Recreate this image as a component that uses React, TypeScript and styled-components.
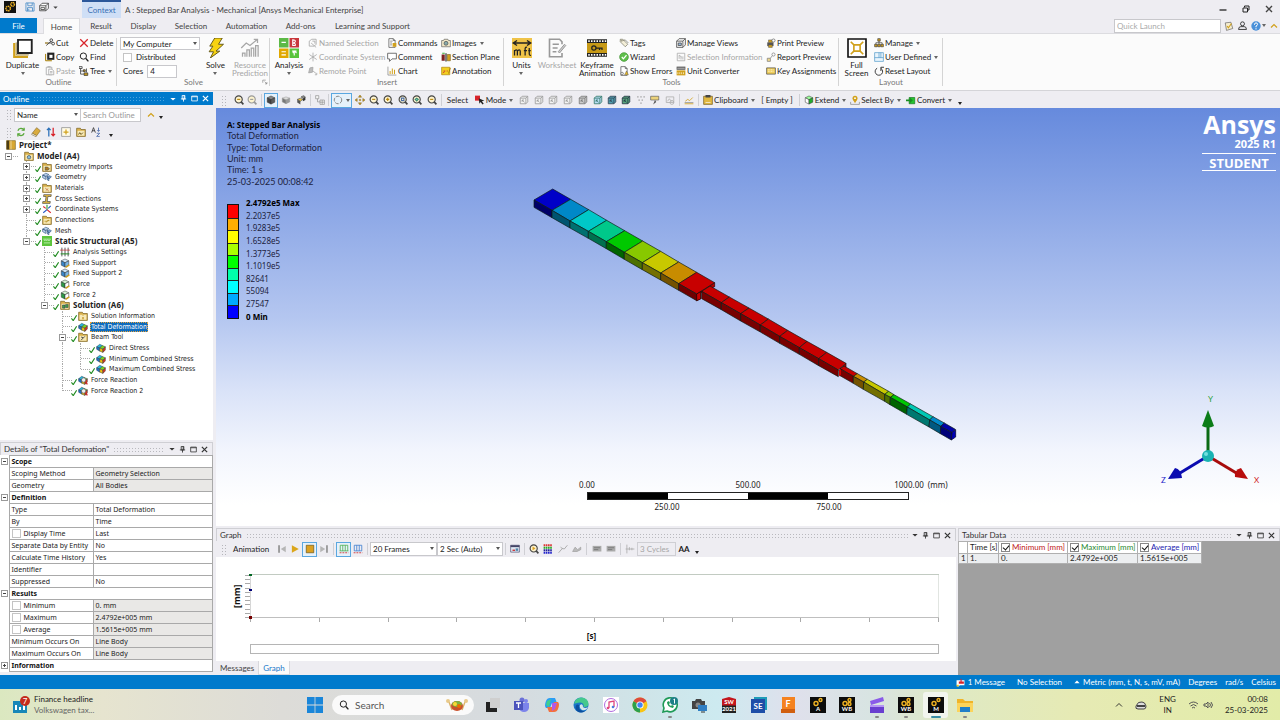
import React from "react";
import styled, { createGlobalStyle, css } from "styled-components";

const font = {
  ui: '"Lato", "Open Sans", sans-serif',
  dense: '"Noto Sans", "Open Sans", sans-serif',
  tree: '"DejaVu Sans Condensed", "DejaVu Sans", sans-serif',
};

const Global = createGlobalStyle`
  * { box-sizing: border-box; }
  body { margin: 0; background: #eeedf2; }
  body, button, input, select, table {
    font-family: ${font.ui};
    font-size: 8px;
    line-height: 12px;
    color: #222;
  }
`;

const c = {
  chrome: "#eeedf2",
  blue: "#007acc",
  gold: "#d1a11c",
  line: "#a9a9a9",
  off: "#a6a6a6",
  ink: "#333",
};

/* ---------- icons ---------- */

const cube = (top: string, left: string, right: string) => (
  <g stroke="#333" strokeWidth="0.8">
    <path d="M8 1.500 14 4.500 8 7.500 2 4.500Z" fill={top} />
    <path d="M2 4.500 8 7.500V14.500L2 11.500Z" fill={left} />
    <path d="M14 4.500 8 7.500V14.500L14 11.500Z" fill={right} />
  </g>
);
const folder = (inner: React.ReactNode) => (
  <g>
    <path d="M1 2h6l1 2h7v11H1z" fill="#d9b04a" stroke="#6b5313" />
    <path d="M2.500 6h11v8h-11z" fill="#f6e9b8" />
    {inner}
  </g>
);
const lens = (inner: React.ReactNode, col = "#444") => (
  <g fill="none" stroke={col} strokeWidth="1.800">
    <circle cx="7.500" cy="7" r="5.700" fill="#fdf3d0" />
    <path d="M11.500 11 15 15" strokeWidth="2.600" />
    {inner}
  </g>
);
const wireCube = (fill: string, col: string) => (
  <g stroke={col} strokeWidth="1.300" fill={fill}>
    <path d="M2 5 5 2h9v9l-3 3H2z" />
    <path d="M2 5h9v9M11 5l3-3" fill="none" />
    <path d="M5 8l4 4M5 8v3M5 8h3" fill="none" />
  </g>
);
const result = (
  <g stroke="#234" strokeWidth="0.7">
    <path d="M1 6 6 2 10 4 6 8Z" fill="#29b6d8" />
    <path d="M1 6 6 8V13L1 10Z" fill="#1f6fc4" />
    <path d="M6 8 10 4 15 6 11 10Z" fill="#7bd321" />
    <path d="M6 8 11 10V15L6 13Z" fill="#f1c40f" />
    <path d="M11 10 15 6V11L11 15Z" fill="#d9381e" />
  </g>
);
const gears = (s: string) => (
  <g fill="none" stroke={s} strokeWidth="2">
    <circle cx="5.500" cy="10" r="3" strokeDasharray="1.800 0.700" />
    <circle cx="11.500" cy="4.500" r="2.400" strokeDasharray="1.500 0.600" />
  </g>
);
const page = (col: string) => (
  <path d="M3 1h7l3 3v11H3zM10 1v3h3" fill="#fff" stroke={col} strokeWidth="1.200" />
);

const glyphs: Record<string, React.ReactNode> = {
  app: (<g><path d="M0 0h16v16H0z" fill="#111" />{gears("#f0b323")}</g>),
  save: (<g fill="none" stroke="#4f8fc8" strokeWidth="1.400"><path d="M1.500 1.500h13v13h-13z" /><path d="M4.500 1.500v4.500h7V1.500M4 14.500V9h8v5.500M6 14v-3" /></g>),
  openBox: (<g fill="#fff" stroke="#333" strokeWidth="1.200"><path d="M1 6h10v8H1zM1 6l4-4h10l-4 4M11 14l4-4V2" /><path d="M3 9h6v3H3z" /></g>),
  duplicate: (<g fill="none"><path d="M1 4v11h11" stroke={c.gold} strokeWidth="1.800" /><path d="M4 1.500h11v10.500H4z" fill="#fff" stroke="#222" strokeWidth="1.500" /><path d="M2.600 3.500v10h10" stroke="#8a6d1a" strokeWidth="0.6" /></g>),
  cut: (<g fill="none" stroke="#333" strokeWidth="1.300"><circle cx="10" cy="3.500" r="2.200" /><circle cx="13" cy="9" r="2.200" /><path d="M0 8h11M2 12l8-7" /><path d="M0 8h5" stroke={c.gold} /></g>),
  copy: (<g><path d="M1 3v11h10" fill="none" stroke="#a67c00" strokeWidth="1.600" /><path d="M3.500 1H15v11.500H3.500z" fill="#222" /><path d="M7 4.500h5v5H7z" fill="#fff" /></g>),
  paste: (<g fill="none" stroke={c.off} strokeWidth="1.300"><path d="M2 2h9v12H2z" /><path d="M6 5h5l3 3v6H6z" fill="#fff" /><path d="M4 1h5M8 9h4M8 11h4" /></g>),
  del: <path d="M2 2 14 14M14 2 2 14" stroke="#d8232a" strokeWidth="2" />,
  find: (<g fill="none" stroke="#222" strokeWidth="1.600"><circle cx="7" cy="6.500" r="5" /><path d="m11 10.500 4 4.500" strokeWidth="2.200" /></g>),
  tree: (<g fill="none" stroke="#333" strokeWidth="1.200"><path d="M0 1h5v3H0zM2.500 4v9h5M2.500 8h5" /><path d="M7 6h3v3H7zM8 11h6v4H8z" fill={c.gold} /><path d="M12 4v6" /></g>),
  bolt: <path d="M7 0h6l-3 5h4L8 10.500h3L3.500 16 6 11H2.500l3-4.500H3z" fill="#f7d312" stroke="#554a10" strokeWidth="0.7" />,
  resource: (<g fill="none" stroke={c.off} strokeWidth="1"><path d="M1 8 5 4l3 2 6-5M11 1h3v3" /><path d="M2 15v-3h2v3M5.500 15V9.500h2V15M9 15V8h2v7M12.500 15V6h2v9" /></g>),
  analysis: (<g><path d="M0 0h7.600v7.600H0z" fill="#5cb947" /><path d="M8.400 0H16v7.600H8.400z" fill="#c8373c" /><path d="M0 8.400h7.600V16H0z" fill="#e0a800" /><path d="M8.400 8.400H16V16H8.400z" fill="#58c43c" /><g stroke="#fff" fill="none" strokeWidth="0.9"><path d="M2 3.500h3.500M11 1.500q2.500 0 2 1.500-.5 1-2 1 2.500 0 2 2h-2zM2 11h3.500M2 13.500h3.500M10.500 10.500h3.500M11 12l1.500-1.500L14 12M12.200 11v3" /></g></g>),
  named: (<g fill="none" stroke={c.off} strokeWidth="1.300"><path d="M2 5l4-3h7v8l-3 3H2z" /><path d="M5 8l8 7M7 5h4v4" /></g>),
  coord: (<g stroke={c.off} strokeWidth="1.300"><path d="M8 1v14M2 4l12 8M14 4 2 12" /></g>),
  remote: (<g stroke={c.off} strokeWidth="1.300" fill="#bbb"><path d="M1 11 3 3l5-1-1 8z" /><path d="M8 8l5 4M11 14h3v-3" fill="none" /></g>),
  commands: (<g>{page("#555")}<path d="M5 5h4M5 8h3M5 11h3" stroke="#555" /><path d="M9 8h6v6H9z" fill={c.gold} /></g>),
  comment: <path d="M1 2h14v9H8l-4 4v-4H1z" fill="#fff" stroke="#555" strokeWidth="1.300" />,
  chart: (<g stroke={c.gold} strokeWidth="1.600"><path d="M1.500 1v13.500H15" stroke="#777" strokeWidth="1" fill="none" /><path d="M5 13V8M8.500 13V4M12 13V6" /></g>),
  images: (<g><path d="M1 4h3l1-2h6l1 2h3v10H1z" fill="#f2e9c8" stroke="#555" /><circle cx="8" cy="8.500" r="3.200" fill="#8aa" stroke="#444" /></g>),
  section: (<g><path d="M1 4h5v10H1z" fill="#7d2020" /><path d="M7 2h2v13H7z" fill="#333" /><path d="M10 4h5v10h-5z" fill={c.gold} stroke="#7d6420" /><path d="M2 2h4" stroke="#2a2" strokeWidth="1.500" /></g>),
  annotation: (<g><path d="M1 2h13v12H1z" fill="#f2cf1f" stroke="#a67c00" /><path d="M4 8h3M9 8h2M3 11l3-2" stroke="#c33" strokeWidth="1.300" /><path d="m12 12 3-9" stroke="#a67c00" strokeWidth="1.400" /></g>),
  units: (<g><path d="M0 0h16v16H0z" fill="#efc348" /><path d="M1 4h14M4 2 1 4l3 2M12 2l3 2-3 2" stroke="#222" fill="none" strokeWidth="1.100" /><path d="M2 14V9.500M2 10.500q2-2 2.300 0V14M4.300 10.500q2-2 2.300 0V14M10.500 14V8.500q.2-1.500 1.500-1M9.500 10h2.500M13.800 8v5q.2 1 1.400.8M13 10h2" stroke="#222" fill="none" strokeWidth="1" /></g>),
  worksheet: (<g fill="none" stroke="#999" strokeWidth="1.300"><path d="M12 5V3L10 1H2v14h10v-3" /><path d="M4.500 5h5M4.500 8h4M4.500 11h3" /><path d="m9 11 5-6 1 1-5 6z" fill="#ccc" strokeWidth="0.8" /></g>),
  keyframe: (<g><path d="M0 1h16v14H0z" fill="#222" /><path d="M0 4h16v8H0z" fill="#c79a17" /><path d="M1 2.500h15M1 13.500h15" stroke="#fff" strokeWidth="1.400" strokeDasharray="1.200 1" /><circle cx="5.500" cy="8" r="1.700" fill="none" stroke="#222" /><path d="M7 8h5v1.500M10 8v1.500" stroke="#222" fill="none" /></g>),
  tags: (<g fill="#f4efd8" stroke="#665" strokeWidth="1"><path d="M2 2h4l8 8-4 4-8-8z" /><circle cx="4.500" cy="4.500" r="0.8" /><path d="M6 4l4-1 5 5" fill="none" /></g>),
  wizard: (<g><circle cx="8" cy="8" r="7" fill="#5fbf4a" stroke="#3d8f2e" /><path d="m4.500 8 2.500 3 5-6" fill="none" stroke="#fff" strokeWidth="2" /></g>),
  errors: (<g>{page("#555")}<path d="m9 14 3-6 3 6z" fill="#e9b820" stroke="#555" strokeWidth="0.7" /><circle cx="5" cy="12" r="2" fill="#eee" stroke="#555" /></g>),
  views: (<g fill="#f2f2f2" stroke="#444" strokeWidth="1.200"><path d="M1 5h10v10H1zM1 5l4-4h10l-4 4M11 15l4-4V1" /><path d="M3.500 8h5v4h-5z" fill="#9bd" /></g>),
  selInfo: (<g fill="none" stroke={c.off} strokeWidth="1.200"><path d="M2 2h12v12H2z" /><path d="M5 5v6M8 7v5M11 7v5M5 5l4 3" /></g>),
  unitConv: (<g><path d="M1 1h14v5H1z" fill="#555" /><path d="M1 7h14v8H1z" fill={c.gold} /><path d="M3 13v-3M6 13v-3M9 13v-3M12 13v-3M2 3.500h12" stroke="#fff" /></g>),
  print: (<g><path d="M2 7h10v6H2z" fill="#555" /><path d="M4 3h6v4H4zM4 11h6v4H4z" fill={c.gold} stroke="#555" strokeWidth="0.8" /><circle cx="12" cy="4" r="2.500" fill="#fff" stroke="#555" /></g>),
  report: (<g fill="#fff" stroke="#777" strokeWidth="1.100"><circle cx="12" cy="4" r="2.500" /><path d="M2 10h5v5H2z" fill="#efd98c" /><path d="m7 10 3-4" /></g>),
  keys: (<g><path d="M1 3h14v10H1z" fill="#f0cf5c" stroke="#333" /><path d="M3 6h10M3 8.500h10" stroke="#fff" strokeDasharray="1.500 1" /></g>),
  full: (<g fill="none"><path d="M.8.8h14.400v14.400H.8z" stroke="#111" strokeWidth="1.300" fill="#fff" /><path d="M5.500 5.500h5v5h-5z" stroke={c.gold} strokeWidth="1.300" /><path d="m3 3 2.500 2.500M13 3l-2.500 2.500M3 13l2.500-2.500M13 13l-2.500-2.500" stroke={c.gold} strokeWidth="1.300" /></g>),
  manage: (<g fill={c.gold} stroke="#333"><path d="M6 1h4v4H6zM1 10h4v4H1zM6 10h4v4H6zM11 10h4v4h-4z" /><path d="M8 5v5M3 10V7.500h10V10" fill="none" /></g>),
  userDef: (<g fill="#eaf5fc" stroke="#3f8fc4"><path d="M1 1h14v14H1zM8 1v8M1 9h14M11 1v8" /></g>),
  reset: (<g fill="none" stroke="#333" strokeWidth="1.500"><path d="M5 3.500a6 6 0 1 0 6 .2M11 8V2h5" /></g>),
  launcher: <path d="M2 10V3h8M7 7l6 6M13 8v5H8" fill="none" stroke="#777" strokeWidth="1.600" />,
  cubeSolid: cube("#888", "#444", "#5b5b5b"),
  cubeFlat: (<g stroke="#999" strokeWidth="0.8"><path d="M8 3 14 5 8 8 2 5Z" fill="#ddd" /><path d="M2 5 8 8v6L2 11Z" fill="#777" /><path d="M14 5 8 8v6l6-3Z" fill="#999" /></g>),
  cubes: (<g><path d="M2 7l5-2 4 2-4 3z" fill="#e3c14e" stroke="#333" strokeWidth="0.8" /><path d="M2 7v5l5 3v-5z" fill="#555" /><path d="M8 3l4-2 3 2-3 3z" fill="#888" stroke="#333" strokeWidth="0.8" /><path d="M11 10V6l4-3v5z" fill="#333" /></g>),
  explode: (<g fill="#f5f5f5" stroke="#888"><path d="M1 1h5v5H1zM8 8h7v7H8zM11.500 8v7M8 11.500h7" /><path d="M4 6v5h4" fill="none" /></g>),
  rotate: (<g fill="none" stroke="#888" strokeWidth="1.600"><circle cx="8" cy="8" r="6" strokeDasharray="6 2" /></g>),
  pan: (<g fill={c.gold} stroke="#6b5313" strokeWidth="0.7"><path d="M8 0l2.500 3.500h-5zM8 16l2.500-3.500h-5zM0 8l3.500-2.500v5zM16 8l-3.500-2.500v5z" /><circle cx="8" cy="8" r="1.300" /></g>),
  zoomMinus: lens(<path d="M5 7h5" stroke="#b8860b" />),
  zoomPlus: lens(<path d="M5 7h5M7.500 4.500v5" stroke="#b8860b" />),
  zoomGrey: lens(<path d="M5 7h5" />, "#999"),
  zoomBox: lens(<path d="M5.500 5h4v4h-4z" stroke="#4a6da7" />),
  zoomFit: lens(<path d="m5 7 2.500-2 2.500 2-2.500 2.500z" stroke="#3d8f6e" fill="#8cc" />),
  cursor: (<g><path d="M0 1h8v8H0z" fill="#d8232a" /><path d="m6 5 9 4-4 1 3 4-2 1-3-4-2 3z" fill="#222" /></g>),
  wireOff: wireCube("#f4f4f4", "#999"),
  wireGrey: wireCube("#ccc", "#777"),
  wireBlue: wireCube("#b9dcf5", "#376"),
  wireTeal: wireCube("#4f9fb0", "#345"),
  wireGreen: wireCube("#58a77c", "#234"),
  dots: (<g fill="#999"><path d="M2 2h2v2H2zM7 2h2v2H7zM12 2h2v2h-2zM4 7h2v2H4zM9 7h2v2H9zM7 12h2v2H7z" /></g>),
  label: (<g><path d="M1 2h13v6H1z" fill="#ecd27a" stroke="#555" /><path d="m8 8-3 7 5-4z" fill="#555" /></g>),
  photo: (<g fill="none" stroke="#aaa" strokeWidth="1.200"><path d="M2 3h12v9H2zM4 10l3-4 3 4 2-2" /><circle cx="11" cy="12" r="3" /></g>),
  spark: (<g fill="none" stroke={c.gold} strokeWidth="1.300"><path d="M1 14h14M2 10l4-3 3 2 5-5" /><path d="M1 12h14" stroke="#999" /></g>),
  clipboard: (<g><path d="M1 2h14v13H1z" fill="#e2b840" stroke="#665014" /><path d="M4 0h8v4H4z" fill="#444" /><path d="M4 12h8" stroke="#fff" /></g>),
  extend: cube("#9f9", "#fff", "#1fae2c"),
  pin: (<g><circle cx="8" cy="5" r="4" fill={c.gold} /><path d="m5 8 3 5 3-5z" fill={c.gold} /><circle cx="8" cy="5" r="1.500" fill="#fff" /><path d="M1 11v4h14v-4" fill="none" stroke="#777" /></g>),
  convert: (<g><path d="M5 4h9v10H5z" fill="#24c32f" stroke="#176b1d" /><path d="M0 7h6V4l5 4.500L6 13v-3H0z" fill="#1a8f22" /></g>),
  refresh: (<g fill="none" stroke="#5aa83c" strokeWidth="2"><path d="M3 6a5.500 5.500 0 0 1 10-1M13 10A5.500 5.500 0 0 1 3 11" /><path d="M13 1v4H9M3 15v-4h4" /></g>),
  eraser: (<g stroke="#6b5313" strokeWidth="0.8"><path d="m9 1 6 5-6 8-7-4z" fill="#d9ab3f" /><path d="m2 10 7 4-1 1.500L1 12z" fill="#fff" /></g>),
  sort: (<g fill="none" strokeWidth="2"><path d="M4.500 15V2M1.500 5l3-3 3 3" stroke="#2a6fb8" /><path d="M11.500 1v13M8.500 11l3 3 3-3" stroke="#d8232a" /></g>),
  plusBox: (<g><path d="M1 1h14v14H1z" fill="#fffbe8" stroke="#777" /><path d="M8 4v8M4 8h8" stroke={c.gold} strokeWidth="2" /></g>),
  folder: folder(<path d="M4 12l2-3 2 3 3-3" fill="none" stroke="#6b5313" strokeWidth="1.500" />),
  az: (<g fill="none" stroke="#333" strokeWidth="1.300"><path d="m1 9 3-8 3 8M2 6h4" /><path d="M9 10h5l-5 5h5M12 1v6M10 5l2 2 2-2" stroke="#46a" /></g>),
  project: (<g><path d="M1 1h14v14H1z" fill="#d8a833" stroke="#7d6420" /><path d="M1 1h4v14H1z" fill="#4c3d15" /><path d="M8 1v14" stroke="#fff" strokeWidth="0.8" /></g>),
  model: folder(<circle cx="8" cy="10" r="2.800" fill="#8bbfdc" stroke="#345" />),
  geomImport: folder(<path d="M5 8h4l3 3-3 2H5z" fill="#b07b1f" stroke="#345" strokeWidth="0.8" />),
  geometry: (<g fill="#bcd3ee" stroke="#33567e"><path d="m1 5 5-3 5 2-5 3zM1 5v4l5 3V7z" /><path d="m8 7 5-1 2 2-4 3zM8 7v5l3 2v-3z" fill="#7fa6d4" /></g>),
  materials: folder(<path d="m5 8 6 5M6 12l4-3" stroke="#b8602f" />),
  cross: <path d="M2 1h12v3H9v8h5v3H2v-3h4V4H2z" fill="#e2b840" stroke="#444" transform="skewX(-8) translate(1 0)" />,
  coords: (<g fill="none" strokeWidth="1.700"><path d="M8 9V1" stroke="#2a9c2a" /><path d="m8 9 6 5M2 4l4 3" stroke="#d8232a" /><path d="m8 9-6 5M14 3l-4 4" stroke="#2457c5" /></g>),
  connections: folder(<path d="M4 10h3l2-1h3M6 12l5-4" stroke="#a67c00" fill="none" />),
  structural: (<g><path d="M0 0h16v16H0z" fill="#5cc43c" /><path d="M2 5h12M3 8l2-2 2 2 2-2 2 2 2-2M3 11h10" stroke="#e6ffe0" fill="none" /></g>),
  settings: (<g stroke="#444" fill="none"><path d="M3 1v14M8 1v14M13 1v14" strokeWidth="1.400" /><path d="M0 5h16" stroke="#c22" /><path d="M1 11h14" stroke="#282" strokeWidth="1.600" /></g>),
  support: (<g>{cube("#cfe6fa", "#3a86c8", "#7db6e4")}<path d="m9 15 6-4" stroke={c.gold} strokeWidth="2" /></g>),
  force: (<g>{cube("#d4f5d4", "#2c9b45", "#fff")}<path d="m9 15 6-4" stroke={c.gold} strokeWidth="2" /></g>),
  solution: folder(<path d="M4 8h4v5H4zM9 7h4v5H9z" fill="#45a045" stroke="#234" strokeWidth="0.8" />),
  info: folder(<path d="M8 7v1M8 9.500V13" stroke="#b8860b" strokeWidth="1.800" />),
  result,
  beam: folder(<path d="m5 13 6-6M5 8l3 1" stroke="#444" strokeWidth="1.500" />),
  reaction: (<g>{result}<circle cx="9" cy="8" r="3.500" fill="#eee" stroke="#555" /><path d="m12 11 3 4" stroke="#c22" strokeWidth="2" /></g>),
  tick: <path d="m1 9 5 6L15 1" fill="none" stroke="#1f8a1f" strokeWidth="3" />,
  down: <path d="M1 5h14l-7 7z" fill="currentColor" />,
  up: <path d="M1 11h14L8 4z" fill="currentColor" />,
  chevUp: <path d="m2 11 6-6 6 6" fill="none" stroke={c.gold} strokeWidth="2.400" />,
  chevDark: <path d="m2 11 6-6 6 6" fill="none" stroke="#222" strokeWidth="1.800" />,
  pushpin: <path d="M5 1h6v8H5zM2 9h12M8 9v6M9.500 1v8" fill="none" stroke="currentColor" strokeWidth="2" />,
  square: <path d="M1.500 2.500h13v11h-13zM1.500 4h13" fill="none" stroke="currentColor" strokeWidth="1.800" />,
  close: <path d="M2 2 14 14M14 2 2 14" stroke="currentColor" strokeWidth="2.800" />,
  minimize: <path d="M1 10h14" stroke="#222" strokeWidth="2.600" />,
  restore: <path d="M5 5V2h9v8h-3M2 6h9v8H2z" fill="none" stroke="#222" strokeWidth="2" />,
  note: (<g><path d="M2 3l9-1 3 10-10 3z" fill="#f6edcf" stroke="#555" /><path d="m5 8 2 3 5-7" fill="none" stroke={c.gold} strokeWidth="1.800" /></g>),
  user: (<g fill="none" stroke="#222" strokeWidth="1.500"><circle cx="8" cy="5" r="3.500" /><path d="M1 15q0-5 4-5h6q4 0 4 5z" /></g>),
  help: (<g><circle cx="8" cy="8" r="7.500" fill="#4a90d9" /><path d="M5.500 6q0-3 2.500-3t2.500 2.500Q10.500 7 8 8v2M8 11.500v2" fill="none" stroke="#fff" strokeWidth="1.600" /></g>),
  toStart: (<g fill="#b5b5b5"><path d="M2 2h2.500v12H2z" fill="#888" /><path d="M14 3v10L6 8z" /></g>),
  play: <path d="M3 2v12l11-6z" fill="#dba61b" />,
  stop: <path d="M2 2h12v12H2z" fill="#dba020" stroke="#5f4a10" />,
  toEnd: (<g fill="#b5b5b5"><path d="M11.500 2H14v12h-2.500z" fill="#888" /><path d="M2 3v10l8-5z" /></g>),
  frameGreen: (<g fill="none" stroke="#4caf50" strokeWidth="1.300"><path d="M2 11V2h12v9M6 2v9M10 2v9" /><path d="M1 14h14" stroke="#c22" strokeDasharray="3 1.500" /><path d="M1 11h14" stroke="#4caf50" /></g>),
  frameBlue: (<g fill="none" stroke="#3f7fd0" strokeWidth="1.300"><path d="M2 11V2h12v9M6 2v9M10 2v9M2 11h12" /><path d="M1 14h14" stroke="#c22" strokeDasharray="3 1.500" /></g>),
  exportVid: (<g><path d="M1 2h14v11H1z" fill="#dfe7f2" stroke="#446" /><path d="M1 2h14v3H1z" fill="#446" /><path d="M4 10h4" stroke="#c22" strokeWidth="2" /><path d="M9 7h4v4H9z" fill="#58a" /></g>),
  zoomPlay: lens(<path d="M6 4.500v5l4-2.500z" fill="#dba020" stroke="#dba020" strokeWidth="0.6" />),
  palette: (<g strokeWidth="3" strokeDasharray="2.600 0.900"><path d="M1 2h14" stroke="#d33" /><path d="M1 6h14" stroke="#2a2" /><path d="M1 10h14" stroke="#229" /><path d="M1 14h14" stroke="#22c" /></g>),
  sketch: <path d="m1 14 6-7 3 1 5-6M4 5l4 3" fill="none" stroke="#aaa" strokeWidth="1.500" />,
  wave: <path d="M1 12 5 5l4 4 5-4v4l-6 3z" fill="#bbb" stroke="#999" />,
  greyBlock: (<g><path d="M1 3h14v9H1z" fill="#aaa" /><path d="M3 6h10M3 9h7" stroke="#777" strokeWidth="1.500" /></g>),
  axis: <path d="M3 1v14M1 8h14M7 5v5M11 6v4" fill="none" stroke="#aaa" strokeWidth="1.300" />,
  message: (<g><path d="M1 4h14v9H7l-4 3v-3H1z" fill="#fff" /><path d="M5 6h3V1l2 1v4h4v4H5z" fill="#d8232a" /><path d="M1 12h4v3H1z" fill="#f3c21b" /></g>),
};

type IconProps = { name: string; size?: number; w?: number };
const Svg = styled.svg`
  display: block;
  flex: none;
`;
const Icon = ({ name, size = 10, w }: IconProps) => (
  <Svg width={w ?? size} height={size} viewBox="0 0 16 16" aria-hidden="true">
    {glyphs[name]}
  </Svg>
);

/* ---------- shared parts ---------- */

const Page = styled.div`
  min-height: 100vh;
  display: flex;
  flex-direction: column;
  background: ${c.chrome};
  overflow: hidden;
`;

const Plain = styled.button`
  border: 0;
  padding: 0;
  margin: 0;
  background: none;
  color: inherit;
  display: flex;
  align-items: center;
  white-space: nowrap;
  cursor: pointer;
`;

const Tick = styled.input.attrs({ type: "checkbox" })`
  appearance: none;
  flex: none;
  margin: 0;
  width: 9px;
  height: 9px;
  border: 1px solid #c4c4c4;
  background: #fff;
  position: relative;
  &:checked { border-color: #888; }
  &:checked::after {
    content: "";
    position: absolute;
    left: 2px;
    top: 0;
    width: 3px;
    height: 5px;
    border: solid #111;
    border-width: 0 1px 1px 0;
    transform: rotate(40deg);
  }
`;

const SelectBox = styled.span<{ $w: number; $h?: number }>`
  position: relative;
  display: flex;
  flex: none;
  width: ${(p) => p.$w}px;
  height: ${(p) => p.$h ?? 14}px;
  &::after {
    content: "";
    position: absolute;
    right: 3px;
    top: 5px;
    border: 2px solid transparent;
    border-top: 3px solid #555;
    border-bottom: 0;
    pointer-events: none;
  }
  select {
    appearance: none;
    width: 100%;
    margin: 0;
    padding: 0 2px;
    border: 1px solid #c8c8cc;
    border-radius: 0;
    background: #fff;
  }
`;

/* ---------- title bar and tabs ---------- */

const TitleBar = styled.header`
  display: flex;
  align-items: center;
  height: 18px;
  padding: 0 4px;
  color: #444;
`;
const QuickTools = styled.div`
  display: flex;
  align-items: center;
  gap: 4px;
  width: 78px;
  margin-top: -4px;
  & > :first-child { margin-right: 5px; }
`;
const ContextTab = styled.div`
  width: 39px;
  height: 18px;
  padding-top: 2px;
  border-top: 2px solid #2b579a;
  background: #cfdff6;
  color: #3a6fb5;
  text-align: center;
  line-height: 12px;
`;
const WindowTitle = styled.h1`
  margin: 0 0 0 4px;
  flex: 1;
  font-size: 8px;
  font-weight: 400;
  line-height: 18px;
  padding-top: 2px;
`;
const WindowButtons = styled.div`
  display: flex;
  gap: 15px;
  margin-right: 3px;
`;

const TabBar = styled.nav`
  display: flex;
  height: 16px;
  border-bottom: 1px solid #dcdce0;
`;
const Tab = styled(Plain)<{ $w: number; $kind?: "file" | "on" }>`
  width: ${(p) => p.$w}px;
  height: 16px;
  justify-content: center;
  color: #444;
  ${(p) => p.$kind === "file" && css`
    background: ${c.blue};
    color: #fff;
    height: 15px;
    margin-right: 6px;
  `}
  ${(p) => p.$kind === "on" && css`
    background: #fbfbfb;
    border: 1px solid #dcdce0;
    border-bottom: 0;
  `}
`;
const TabTools = styled.div`
  display: flex;
  align-items: center;
  gap: 4px;
  margin-left: auto;
  padding-right: 2px;
`;
const QuickLaunch = styled.input`
  width: 107px;
  height: 14px;
  margin-right: -1px;
  padding: 0 2px;
  border: 1px solid #c8c8cc;
  background: #fff;
  &::placeholder { color: #aaa; opacity: 1; }
`;

/* ---------- ribbon ---------- */

const Ribbon = styled.section`
  display: flex;
  height: 57px;
  background: #fbfbfb;
  border-bottom: 1px solid #d4d4d8;
  padding-top: 2px;
`;
const Group = styled.div`
  position: relative;
  display: flex;
  flex-direction: column;
  padding: 0 1px;
  &::after {
    content: "";
    position: absolute;
    right: 0;
    top: 2px;
    bottom: 4px;
    width: 1px;
    background: #d4d4d4;
  }
`;
const GroupBody = styled.div`
  display: flex;
  height: 41px;
`;
const GroupName = styled.div`
  text-align: center;
  line-height: 11px;
  color: #777;
`;
const Launcher = styled.span`
  position: absolute;
  right: 2px;
  bottom: 5px;
`;
const Caret = styled.i`
  margin-left: 2px;
  border: 2px solid transparent;
  border-top: 3px solid #666;
  border-bottom: 0;
`;
const HelpMenu = styled(Plain)`
  ${Caret} { margin-left: 1px; }
`;
const Big = styled(Plain)<{ $w: number }>`
  width: ${(p) => p.$w}px;
  flex-direction: column;
  gap: 3px;
  padding-top: 2px;
  line-height: 8px;
  text-align: center;
  white-space: normal;
  &:disabled { color: ${c.off}; }
  & > span { display: flex; flex-direction: column; align-items: center; }
  ${Caret} { margin: 3px 0 0; }
`;
const Column = styled.div<{ $w: number }>`
  width: ${(p) => p.$w}px;
  display: grid;
  grid-auto-rows: 14px;
`;
const Small = styled(Plain)`
  gap: 1px;
  padding-left: 1px;
  &:disabled { color: ${c.off}; }
`;
const SolveForm = styled.form`
  display: grid;
  grid-auto-rows: 14px;
  width: 80px;
  margin-left: 2px;
  align-items: center;
  label { display: flex; align-items: center; gap: 4px; padding-left: 3px; }
`;
const Cores = styled.input`
  width: 30px;
  height: 13px;
  padding: 0 2px;
  border: 1px solid #c8c8cc;
  background: #fff;
`;

type Item = [icon: string, text: string, opt?: string];
const BigButton = ({ icon, lines, w, off, caret, size = 20 }: { icon: string; lines: string[]; w: number; off?: boolean; caret?: boolean; size?: number }) => (
  <Big $w={w} disabled={off} type="button">
    <Icon name={icon} size={20} w={size} />
    <span>
      {lines.map((l) => <span key={l}>{l}</span>)}
      {caret && <Caret />}
    </span>
  </Big>
);
const Items = ({ w, items }: { w: number; items: Item[] }) => (
  <Column $w={w}>
    {items.map(([icon, text, opt]) => (
      <Small key={text} type="button" disabled={opt === "off"}>
        <Icon name={icon} />
        {text}
        {opt === "menu" && <Caret />}
      </Small>
    ))}
  </Column>
);

const RibbonBar = () => (
  <Ribbon aria-label="Home ribbon">
    <Group>
      <GroupBody>
        <BigButton icon="duplicate" lines={["Duplicate"]} w={43} caret />
        <Items w={34} items={[["cut", "Cut"], ["copy", "Copy"], ["paste", "Paste", "off"]]} />
        <Items w={38} items={[["del", "Delete"], ["find", "Find"], ["tree", "Tree", "menu"]]} />
      </GroupBody>
      <GroupName>Outline</GroupName>
    </Group>
    <Group>
      <GroupBody>
        <SolveForm>
          <SelectBox $w={80} $h={13}>
            <select aria-label="Solve target"><option>My Computer</option></select>
          </SelectBox>
          <label><Tick />Distributed</label>
          <label>Cores <Cores defaultValue="4" /></label>
        </SolveForm>
        <BigButton icon="bolt" lines={["Solve"]} w={31} caret />
        <BigButton icon="resource" lines={["Resource", "Prediction"]} w={38} off />
      </GroupBody>
      <GroupName>Solve</GroupName>
      <Launcher><Icon name="launcher" size={6} /></Launcher>
    </Group>
    <Group>
      <GroupBody>
        <BigButton icon="analysis" lines={["Analysis"]} w={36} caret />
        <Items w={79} items={[["named", "Named Selection", "off"], ["coord", "Coordinate System", "off"], ["remote", "Remote Point", "off"]]} />
        <Items w={54} items={[["commands", "Commands"], ["comment", "Comment"], ["chart", "Chart"]]} />
        <Items w={63} items={[["images", "Images", "menu"], ["section", "Section Plane"], ["annotation", "Annotation"]]} />
      </GroupBody>
      <GroupName>Insert</GroupName>
    </Group>
    <Group>
      <GroupBody>
        <BigButton icon="units" lines={["Units"]} w={33} caret />
        <BigButton icon="worksheet" lines={["Worksheet"]} w={38} off />
        <BigButton icon="keyframe" lines={["Keyframe", "Animation"]} w={42} size={20} />
        <Items w={57} items={[["tags", "Tags"], ["wizard", "Wizard"], ["errors", "Show Errors"]]} />
        <Items w={90} items={[["views", "Manage Views"], ["selInfo", "Selection Information", "off"], ["unitConv", "Unit Converter"]]} />
        <Items w={73} items={[["print", "Print Preview"], ["report", "Report Preview"], ["keys", "Key Assignments"]]} />
      </GroupBody>
      <GroupName>Tools</GroupName>
    </Group>
    <Group>
      <GroupBody>
        <BigButton icon="full" lines={["Full", "Screen"]} w={33} />
        <Items w={69} items={[["manage", "Manage", "menu"], ["userDef", "User Defined", "menu"], ["reset", "Reset Layout"]]} />
      </GroupBody>
      <GroupName>Layout</GroupName>
    </Group>
  </Ribbon>
);

/* ---------- docked panels ---------- */

const Work = styled.main`
  flex: 1;
  display: flex;
  gap: 3px;
  padding-top: 1px;
`;
const LeftDock = styled.div`
  width: 213px;
  flex: none;
  display: flex;
  flex-direction: column;
`;
const RightDock = styled.div`
  flex: 1;
  min-width: 0;
  display: flex;
  flex-direction: column;
`;
const Header = styled.div<{ $active?: boolean }>`
  display: flex;
  align-items: center;
  gap: 4px;
  height: 13px;
  padding: 0 4px 0 3px;
  flex: none;
  color: ${(p) => (p.$active ? "#fff" : "#333")};
  background: ${(p) => (p.$active ? c.blue : c.chrome)};
  border: ${(p) => (p.$active ? "0" : "1px solid #cfcfd4")};
  border-bottom: 0;
  h2 { margin: 0; font-size: 8px; font-weight: 400; line-height: 12px; white-space: nowrap; }
`;
const Dots = styled.span<{ $active?: boolean }>`
  flex: 1;
  height: 5px;
  background-image: radial-gradient(circle, ${(p) => (p.$active ? "#4aa3e0" : "#b9b9be")} 25%, transparent 35%);
  background-size: 3px 3px;
`;
const PanelHeader = ({ title, active }: { title: string; active?: boolean }) => (
  <Header $active={active}>
    <h2>{title}</h2>
    <Dots $active={active} />
    {["down", "pushpin", "square", "close"].map((n) => (
      <Plain key={n} type="button" aria-label={n}>
        <Icon name={n} size={n === "down" ? 6 : 7} />
      </Plain>
    ))}
  </Header>
);
const Grip = styled.i`
  flex: none;
  width: 5px;
  height: 11px;
  background-image: radial-gradient(circle, #b5b5ba 25%, transparent 35%);
  background-size: 3px 3px;
`;
const Strip = styled.div<{ $h: number; $gap?: number }>`
  display: flex;
  align-items: center;
  height: ${(p) => p.$h}px;
  gap: ${(p) => p.$gap ?? 0}px;
  padding-left: 6px;
  flex: none;
`;
const FilterRow = styled(Strip)`
  ${Grip} { margin-right: 3px; }
`;
const SearchOutline = styled.input`
  width: 60px;
  height: 14px;
  padding: 0 2px;
  border: 1px solid #c8c8cc;
  border-left: 0;
  background: #fff;
  &::placeholder { color: #999; opacity: 1; }
`;
const Overflow = styled.i`
  align-self: flex-end;
  margin: 0 0 3px 3px;
  border: 2px solid transparent;
  border-top: 3px solid #222;
  border-bottom: 0;
`;

/* ---------- outline tree ---------- */

const TreePane = styled.div`
  flex: 1;
  background: #fff;
`;
const TreeList = styled.ul`
  list-style: none;
  margin: 0;
  padding: 0;
  display: grid;
  grid-auto-rows: 1fr;
  height: 256px;
`;
const TreeRow = styled.li<{ $bold?: boolean }>`
  display: flex;
  align-items: center;
  min-height: 0;
  line-height: 10px;
  white-space: nowrap;
  font-family: ${font.tree};
  font-size: 7px;
  ${(p) => p.$bold && css`
    font-family: ${font.dense};
    font-size: 8px;
    font-weight: 700;
  `}
`;
const Guide = styled.span<{ $line?: string }>`
  position: relative;
  align-self: stretch;
  flex: none;
  width: 18px;
  &::before {
    content: "";
    position: absolute;
    left: 8px;
    top: 0;
    height: ${(p) => (p.$line === "end" ? "50%" : "100%")};
    border-left: ${(p) => (p.$line === "none" ? "0" : "1px dotted #aaa")};
  }
`;
const Branch = styled.i`
  position: absolute;
  left: 9px;
  right: 0;
  top: 5px;
  border-top: 1px dotted #aaa;
`;
const Expander = styled.button`
  position: absolute;
  left: 5px;
  top: 2px;
  width: 7px;
  height: 7px;
  padding: 0;
  border: 1px solid #999;
  background: #fff;
  &::before, &[aria-expanded="false"]::after {
    content: "";
    position: absolute;
    left: 1px;
    top: 2px;
    width: 3px;
    height: 1px;
    background: #444;
  }
  &[aria-expanded="false"]::after { transform: rotate(90deg); }
`;
const Mark = styled.span`
  width: 7px;
  flex: none;
  padding-top: 4px;
  margin-left: -1px;
`;
const NodeText = styled.span<{ $on?: boolean }>`
  margin-left: 2px;
  padding: 0 1px;
  ${(p) => p.$on && css`
    background: #0f6cbd;
    color: #fff;
    outline: 1px dotted #e8a33d;
    outline-offset: -1px;
  `}
`;

type Node = { d: number; icon: string; text: string; open?: boolean; end?: boolean; bold?: boolean; tick?: boolean; on?: boolean; trail?: string };
/* trail: one letter per outer level, "|" where the parent's line runs on past the row */
const nodes: Node[] = [
  { d: 0, icon: "project", text: "Project*", bold: true },
  { d: 1, icon: "model", text: "Model (A4)", bold: true, open: true, end: true },
  { d: 2, icon: "geomImport", text: "Geometry Imports", open: false, tick: true, trail: " " },
  { d: 2, icon: "geometry", text: "Geometry", open: false, tick: true, trail: " " },
  { d: 2, icon: "materials", text: "Materials", open: false, tick: true, trail: " " },
  { d: 2, icon: "cross", text: "Cross Sections", open: false, tick: true, trail: " " },
  { d: 2, icon: "coords", text: "Coordinate Systems", open: false, tick: true, trail: " " },
  { d: 2, icon: "connections", text: "Connections", tick: true, trail: " " },
  { d: 2, icon: "geometry", text: "Mesh", tick: true, trail: " " },
  { d: 2, icon: "structural", text: "Static Structural (A5)", bold: true, open: true, end: true, tick: true, trail: " " },
  { d: 3, icon: "settings", text: "Analysis Settings", tick: true, trail: "  " },
  { d: 3, icon: "support", text: "Fixed Support", tick: true, trail: "  " },
  { d: 3, icon: "support", text: "Fixed Support 2", tick: true, trail: "  " },
  { d: 3, icon: "force", text: "Force", tick: true, trail: "  " },
  { d: 3, icon: "force", text: "Force 2", tick: true, trail: "  " },
  { d: 3, icon: "solution", text: "Solution (A6)", bold: true, open: true, end: true, tick: true, trail: "  " },
  { d: 4, icon: "info", text: "Solution Information", tick: true, trail: "   " },
  { d: 4, icon: "result", text: "Total Deformation", tick: true, on: true, trail: "   " },
  { d: 4, icon: "beam", text: "Beam Tool", open: true, tick: true, trail: "   " },
  { d: 5, icon: "result", text: "Direct Stress", tick: true, trail: "   |" },
  { d: 5, icon: "result", text: "Minimum Combined Stress", tick: true, trail: "   |" },
  { d: 5, icon: "result", text: "Maximum Combined Stress", end: true, tick: true, trail: "   |" },
  { d: 4, icon: "reaction", text: "Force Reaction", tick: true, trail: "   " },
  { d: 4, icon: "reaction", text: "Force Reaction 2", end: true, tick: true, trail: "   " },
];

const Tree = () => (
  <TreePane>
    <TreeList>
      {nodes.map((n) => (
        <TreeRow key={n.text} $bold={n.bold}>
          {(n.trail ?? "").split("").map((t, i) => <Guide key={i} $line={t === "|" ? "full" : "none"} />)}
          {n.d > 0 && (
            <Guide $line={n.d === 1 ? "none" : n.end ? "end" : "full"}>
              <Branch />
              {n.open !== undefined && <Expander aria-expanded={n.open} aria-label={n.text} />}
            </Guide>
          )}
          <Mark>{n.tick && <Icon name="tick" size={6} />}</Mark>
          <Icon name={n.icon} size={10} />
          <NodeText $on={n.on}>{n.text}</NodeText>
        </TreeRow>
      ))}
    </TreeList>
  </TreePane>
);

/* ---------- details table ---------- */

const DetailsTable = styled.table`
  width: 100%;
  border-collapse: collapse;
  table-layout: fixed;
  background: #fff;
  font-family: ${font.dense};
  font-size: 7px;
  td, th {
    height: 12px;
    padding: 0 2px;
    border: 1px solid ${c.line};
    font-weight: 400;
    text-align: left;
    line-height: 11px;
    white-space: nowrap;
  }
  th[colspan] { font-weight: 700; color: #111; }
  td:first-child {
    position: relative;
    padding: 0;
    border-top: 0;
    border-bottom: 0;
    border-left: 0;
  }
  label { display: flex; align-items: center; gap: 3px; }
`;
const Value = styled.td<{ $locked?: boolean }>`
  background: ${(p) => (p.$locked ? "#e9e8e6" : "#fff")};
`;
const Fold = styled(Expander)`
  left: 1px;
  top: 2px;
`;

type Detail = { head?: string; closed?: boolean; name?: string; value?: string; locked?: boolean; check?: boolean };
const details: Detail[] = [
  { head: "Scope" },
  { name: "Scoping Method", value: "Geometry Selection", locked: true },
  { name: "Geometry", value: "All Bodies", locked: true },
  { head: "Definition" },
  { name: "Type", value: "Total Deformation" },
  { name: "By", value: "Time" },
  { name: "Display Time", value: "Last", check: true },
  { name: "Separate Data by Entity", value: "No" },
  { name: "Calculate Time History", value: "Yes" },
  { name: "Identifier", value: "" },
  { name: "Suppressed", value: "No" },
  { head: "Results" },
  { name: "Minimum", value: "0. mm", locked: true, check: true },
  { name: "Maximum", value: "2.4792e+005 mm", locked: true, check: true },
  { name: "Average", value: "1.5615e+005 mm", locked: true, check: true },
  { name: "Minimum Occurs On", value: "Line Body", locked: true },
  { name: "Maximum Occurs On", value: "Line Body", locked: true },
  { head: "Information", closed: true },
];

const Col = styled.col<{ $w?: number }>`
  width: ${(p) => (p.$w ? `${p.$w}px` : "auto")};
`;

const Details = () => (
  <DetailsTable>
    <colgroup><Col $w={9} /><Col $w={84} /><Col /></colgroup>
    <tbody>
      {details.map((r) =>
        r.head ? (
          <tr key={r.head}>
            <td><Fold aria-expanded={!r.closed} aria-label={r.head} /></td>
            <th colSpan={2}>{r.head}</th>
          </tr>
        ) : (
          <tr key={r.name}>
            <td />
            <th>{r.check ? <label><Tick />{r.name}</label> : r.name}</th>
            <Value $locked={r.locked}>{r.value}</Value>
          </tr>
        ),
      )}
    </tbody>
  </DetailsTable>
);

/* ---------- graphics toolbar ---------- */

const Tools = styled.div`
  display: flex;
  align-items: center;
  height: 16px;
  padding-left: 5px;
  flex: none;
`;
const Tool = styled(Plain)<{ $w: number; $on?: boolean }>`
  width: ${(p) => p.$w}px;
  height: 15px;
  flex: none;
  justify-content: center;
  gap: 1px;
  border: 1px solid ${(p) => (p.$on ? "#5aa7e0" : "transparent")};
  background: ${(p) => (p.$on ? "#e6f1fa" : "none")};
`;
const Rule = styled.i`
  flex: none;
  width: 1px;
  height: 12px;
  margin: 0 2px;
  background: #cfcfd4;
`;

type ToolItem = { icon?: string; w: number; on?: boolean; text?: string; menu?: boolean } | "|";
const viewTools: ToolItem[] = [
  { icon: "zoomMinus", w: 13 }, { icon: "zoomGrey", w: 14 }, "|",
  { icon: "cubeSolid", w: 14, on: true }, { icon: "cubeFlat", w: 15 }, { icon: "cubes", w: 15 }, "|",
  { icon: "explode", w: 13 }, "|",
  { icon: "rotate", w: 21, on: true, menu: true },
  { icon: "pan", w: 15 }, { icon: "zoomMinus", w: 14 }, { icon: "zoomPlus", w: 14 }, { icon: "zoomBox", w: 15 }, { icon: "zoomFit", w: 14 }, { icon: "zoomMinus", w: 15 }, "|",
  { text: "Select", w: 27 }, { icon: "cursor", text: "Mode", w: 46, menu: true },
  { icon: "wireOff", w: 14 }, { icon: "wireOff", w: 15 }, { icon: "wireOff", w: 14 }, { icon: "wireOff", w: 15 }, { icon: "wireGrey", w: 15 },
  { icon: "wireBlue", w: 15 }, { icon: "wireTeal", w: 14 }, { icon: "wireGreen", w: 14 }, { icon: "dots", w: 15 }, { icon: "label", w: 14 }, { icon: "photo", w: 15 }, "|",
  { icon: "spark", w: 14 }, "|",
  { icon: "clipboard", text: "Clipboard", w: 56, menu: true }, { text: "[ Empty ]", w: 40 }, "|",
  { icon: "extend", text: "Extend", w: 46, menu: true }, { icon: "pin", text: "Select By", w: 55, menu: true }, { icon: "convert", text: "Convert", w: 52, menu: true },
];

const renderTool = (t: ToolItem, i: number) =>
  t === "|" ? <Rule key={i} /> : (
    <Tool key={i} $w={t.w} $on={t.on} type="button" aria-label={t.text ?? t.icon}>
      {t.icon && <Icon name={t.icon} />}
      {t.text}
      {t.menu && <Caret />}
    </Tool>
  );

/* ---------- viewport ---------- */

const Viewport = styled.section`
  position: relative;
  flex: 1;
  min-height: 418px;
  padding: 11px 4px 0 11px;
  display: flex;
  justify-content: space-between;
  align-items: flex-start;
  background: linear-gradient(#668add, #b4c6f0 50%, #dae3f8 68%, #f2f5fd 82%, #ffffff 95%);
  font-size: 9px;
`;
const Info = styled.div`
  position: relative;
`;
const Caption = styled.div`
  display: grid;
  grid-auto-rows: 1fr;
  height: 68px;
  align-items: center;
  line-height: 11px;
  color: #1c2340;
  strong { color: #000; font-family: ${font.dense}; font-size: 8px; }
`;
const Legend = styled.div`
  display: flex;
  gap: 7px;
  margin-top: 10px;
`;
const Swatches = styled.div`
  display: grid;
  grid-auto-rows: 1fr;
  width: 12px;
  height: 115px;
  margin-top: 7px;
  border: 1px solid #111;
`;
const Swatch = styled.span<{ $c: string }>`
  background: ${(p) => p.$c};
  & + & { border-top: 1px solid #222; }
`;
const Levels = styled.div`
  display: grid;
  grid-auto-rows: 1fr;
  height: 126px;
  align-items: center;
  line-height: 12px;
  font-family: ${font.dense};
  font-size: 8px;
  color: #1c2340;
  strong { color: #000; }
`;
const Brand = styled.div`
  position: relative;
  width: 74px;
  color: #fff;
  font-family: "Open Sans", sans-serif;
  font-weight: 700;
  text-align: right;
`;
const BrandName = styled.div`
  font-size: 25px;
  line-height: 26px;
  margin-top: -8px;
`;
const Release = styled.div`
  font-size: 11px;
  line-height: 14px;
  padding-bottom: 2px;
  border-bottom: 1px solid #fff;
`;
const Edition = styled.div`
  font-size: 13px;
  line-height: 14px;
  margin-top: 2px;
  text-align: center;
  border-bottom: 1px solid #fff;
`;
const Scene = styled.svg`
  position: absolute;
  inset: 0;
  width: 100%;
  height: 100%;
`;
const Triad = styled.svg`
  position: absolute;
  right: 18px;
  bottom: 34px;
  font-size: 8px;
`;
const Ruler = styled.div`
  position: absolute;
  left: 50%;
  bottom: 12px;
  width: 322px;
  transform: translateX(-50%);
  font-family: ${font.dense};
  font-size: 8px;
`;
const Marks = styled.div<{ $inset?: boolean }>`
  display: flex;
  justify-content: space-between;
  padding: 0 ${(p) => (p.$inset ? 80 : 0)}px;
  height: 14px;
  line-height: 14px;
  & > span { width: 0; display: flex; justify-content: center; white-space: pre; }
  & > span > span { position: relative; }
`;
const Unit = styled.span`
  position: absolute;
  left: 100%;
  margin-left: 4px;
`;
const Scale = styled.div`
  display: grid;
  grid-template-columns: repeat(4, 1fr);
  height: 8px;
  border: 1px solid #222;
  background: #fff;
  & > i:nth-child(odd) { background: #000; }
`;

const bands: [string, string][] = [
  ["#0000c8", "#000068"], ["#0088c8", "#005470"], ["#00c8c8", "#007070"], ["#00c88a", "#00704e"], ["#00c800", "#006400"],
  ["#88c800", "#4c7000"], ["#c8c800", "#747000"], ["#c88c00", "#745200"], ["#c80000", "#700000"],
];
const pt = (a: number[], b: number[], t: number) => [a[0] + (b[0] - a[0]) * t, a[1] + (b[1] - a[1]) * t];
const poly = (...ps: number[][]) => ps.map((p) => p.map((v) => Math.round(v)).join(",")).join(" ");

/* one prismatic length of the bar, cut at the given fractions */
const Prism = ({ near, far, low, cuts, colors }: { near: number[][]; far: number[][]; low: number[][]; cuts: number[]; colors: [string, string][] }) => (
  <>
    {colors.map(([top, side], i) => {
      const [a, b] = [cuts[i], cuts[i + 1]];
      const n0 = pt(near[0], near[1], a), n1 = pt(near[0], near[1], b);
      const f0 = pt(far[0], far[1], a), f1 = pt(far[0], far[1], b);
      const l0 = pt(low[0], low[1], a), l1 = pt(low[0], low[1], b);
      return (
        <g key={i} stroke="#0a1a14" strokeWidth="2" strokeLinejoin="round">
          <polygon points={poly(n0, f0, f1, n1)} fill={top} />
          <polygon points={poly(n0, n1, l1, l0)} fill={side} />
        </g>
      );
    })}
  </>
);
const even = (n: number) => Array.from({ length: n + 1 }, (_, i) => i / n);
const red: [string, string] = ["#c80000", "#780000"];

const Bar = () => (
  <Scene viewBox="-912 -216 3192 1254" role="img" aria-label="Deformed stepped bar">
    <polygon points="530,342 584,308 584,320 542,338 542,356 530,362" fill="#b40000" stroke="#200" strokeWidth="2" />
    <Prism near={[[42, 60], [530, 342]]} far={[[98, 27], [584, 308]]} low={[[42, 82], [530, 362]]} cuts={even(9)} colors={bands} />
    <polygon points="958,572 978,550 978,561 962,572" fill="#c80000" stroke="#200" strokeWidth="2" />
    <Prism near={[[545, 334], [955, 570]]} far={[[570, 318], [978, 550]]} low={[[545, 356], [955, 590]]} cuts={even(7)} colors={Array(7).fill(red)} />
    <polygon points="530,342 542,335 542,357 530,362" fill="#c80000" stroke="#200" strokeWidth="2" />
    <Prism
      near={[[960, 566], [1296, 758]]}
      far={[[972, 558], [1306, 748]]}
      low={[[960, 587], [1294, 780]]}
      cuts={[0, 0.12, 0.21, 0.4, 0.45, 0.6, 0.8, 0.9, 1]}
      colors={[red, ["#c88c00", "#745200"], ["#c8c800", "#747000"], ["#88c800", "#4c7000"], ["#00c800", "#006400"], ["#00c8b4", "#007870"], ["#0088c8", "#005880"], ["#0000a8", "#000078"]]}
    />
    <polygon points="1296,758 1307,749 1307,771 1294,780" fill="#0000b4" stroke="#002" strokeWidth="2" />
    <polygon points="957,571 963,567 963,585 957,589" fill="#d00000" />
  </Scene>
);

const legendColors = ["#ff0000", "#ffae00", "#ffff00", "#aaff00", "#00ff00", "#00ffaa", "#00ffff", "#00aaff", "#0000ff"];
const levels = ["2.2037e5", "1.9283e5", "1.6528e5", "1.3773e5", "1.1019e5", "82641", "55094", "27547"];

const View = () => (
  <Viewport>
    <Bar />
    <Info>
      <Caption>
        <strong>A: Stepped Bar Analysis</strong>
        <span>Total Deformation</span>
        <span>Type: Total Deformation</span>
        <span>Unit: mm</span>
        <span>Time: 1 s</span>
        <span>25-03-2025 00:08:42</span>
      </Caption>
      <Legend>
        <Swatches>{legendColors.map((k) => <Swatch key={k} $c={k} />)}</Swatches>
        <Levels>
          <strong>2.4792e5 Max</strong>
          {levels.map((l) => <span key={l}>{l}</span>)}
          <strong>0 Min</strong>
        </Levels>
      </Legend>
    </Info>
    <Brand>
      <BrandName>Ansys</BrandName>
      <Release>2025 R1</Release>
      <Edition>STUDENT</Edition>
    </Brand>
    <Ruler>
      <Marks>
        <span>0.00</span>
        <span>500.00</span>
        <span><span>1000.00<Unit>(mm)</Unit></span></span>
      </Marks>
      <Scale><i /><i /><i /><i /></Scale>
      <Marks $inset>
        <span>250.00</span>
        <span>750.00</span>
      </Marks>
    </Ruler>
    <Triad width="102" height="98" viewBox="0 0 102 98" role="img" aria-label="Axes">
      <path d="M48 62V24" stroke="#0a6b14" strokeWidth="3" />
      <path d="M42 32 48 16 54 32Q48 35 42 32Z" fill="#0c7d18" />
      <path d="M48 62 20 79" stroke="#0b0bb0" strokeWidth="3" />
      <path d="M8 85 15 74Q21 75 22 84Z" fill="#0b0bb0" />
      <path d="M48 62 78 80" stroke="#a80c0c" strokeWidth="3" />
      <path d="M88 85 81 74Q74 76 75 83Z" fill="#b80c0c" />
      <circle cx="48" cy="62" r="6" fill="#19b3b3" />
      <circle cx="46" cy="60" r="2" fill="#6fe0e0" />
      <text x="48" y="8" fill="#1c9c2c">Y</text>
      <text x="1" y="89" fill="#2020c8">Z</text>
      <text x="94" y="89" fill="#d02020">X</text>
    </Triad>
  </Viewport>
);

/* ---------- graph and tabular data ---------- */

const BottomDock = styled.div`
  display: flex;
  gap: 2px;
  height: 149px;
  padding-top: 2px;
  flex: none;
`;
const GraphPanel = styled.section`
  flex: 1;
  min-width: 0;
  display: flex;
  flex-direction: column;
`;
const AnimLabel = styled.span`
  width: 49px;
  padding-left: 7px;
`;
const Cycles = styled.input`
  width: 39px;
  height: 14px;
  padding: 0 2px;
  border: 1px solid #cfcfd4;
  background: #eeedf2;
  color: ${c.off};
`;
const Chart = styled.div`
  flex: 1;
  display: grid;
  grid-template-columns: 28px 1fr;
  grid-template-rows: 60px 13px 10px;
  align-content: start;
  row-gap: 1px;
  padding: 12px 17px 0 0;
  background: #fff;
  font-family: ${font.dense};
  font-weight: 700;
  color: #111;
`;
const YName = styled.span`
  writing-mode: vertical-rl;
  transform: rotate(180deg);
  justify-self: end;
  width: 14px;
  height: 54px;
  font-size: 9px;
  line-height: 14px;
  text-align: center;
`;
const Plot = styled.svg`
  width: 100%;
  height: 60px;
`;
const XName = styled.span`
  grid-column: 2;
  text-align: center;
`;
const Track = styled.div`
  grid-column: 2;
  margin-left: 6px;
  border: 1px solid #b5b5b5;
`;
const BottomTabs = styled.div`
  display: flex;
  height: 14px;
  padding-left: 3px;
`;
const BottomTab = styled(Plain)<{ $on?: boolean }>`
  padding: 0 4px 0 1px;
  color: ${(p) => (p.$on ? "#1979ca" : "#444")};
  ${(p) => p.$on && css`
    background: #fbfbfb;
    border: 1px solid #d8d8dc;
    border-top: 0;
    padding: 0 4px;
  `}
`;

const Graph = () => (
  <GraphPanel>
    <PanelHeader title="Graph" />
    <Tools>
      <Grip />
      <AnimLabel>Animation</AnimLabel>
      {([{ icon: "toStart", w: 13 }, { icon: "play", w: 14 }, { icon: "stop", w: 15, on: true }, { icon: "toEnd", w: 14 }, "|",
        { icon: "frameGreen", w: 15, on: true }, { icon: "frameBlue", w: 14 }, "|"] as ToolItem[]).map(renderTool)}
      <SelectBox $w={67}><select aria-label="Frames"><option>20 Frames</option></select></SelectBox>
      <SelectBox $w={66}><select aria-label="Duration"><option>2 Sec (Auto)</option></select></SelectBox>
      {(["|", { icon: "exportVid", w: 14 }, "|", { icon: "zoomPlay", w: 13 }, { icon: "palette", w: 15 }, { icon: "sketch", w: 15 }, { icon: "wave", w: 14 }, "|",
        { icon: "greyBlock", w: 15 }, { icon: "greyBlock", w: 14 }, "|", { icon: "axis", w: 14 }] as ToolItem[]).map(renderTool)}
      <Cycles aria-label="Cycles" defaultValue="3 Cycles" disabled />
      <Tool $w={16} type="button"><b>AA</b></Tool>
      <Overflow />
    </Tools>
    <Chart>
      <YName>[mm]</YName>
      <Plot viewBox="0 0 695 60" preserveAspectRatio="none" role="img" aria-label="Deformation over time">
        <path d="M6 5.500H695V48" fill="none" stroke="#c2cbc2" />
        <path d="M6 48.500H695" stroke="#bfbfbf" />
        <path d="M6.500 6v42" stroke="#d6d6d6" />
        {even(10).map((t) => <path key={t} d={`M${Math.round(6 + 688 * t)}.500 49v4M1 ${Math.round(6 + 42 * t)}.500h5`} stroke="#aaa" />)}
        <path d="M5 5h3v2H5z" fill="#062" />
        <path d="M5 20h3v2H5z" fill="#007" />
        <path d="M5 47h3v3H5z" fill="#700" />
      </Plot>
      <XName>[s]</XName>
      <Track />
    </Chart>
    <BottomTabs>
      <BottomTab type="button">Messages</BottomTab>
      <BottomTab type="button" $on>Graph</BottomTab>
    </BottomTabs>
  </GraphPanel>
);

const TabularPanel = styled.section`
  width: 322px;
  flex: none;
  background: #a0a0a0;
`;
const DataTable = styled.table`
  width: 243px;
  table-layout: fixed;
  border-collapse: collapse;
  th, td {
    height: 10px;
    padding: 0 2px;
    border: 1px solid #b0b0b0;
    background: #eceef0;
    text-align: left;
    font-weight: 400;
    line-height: 9px;
    white-space: nowrap;
  }
  th { background: #fff; height: 12px; }
`;
const HeadLabel = styled.label<{ $c: string }>`
  display: flex;
  align-items: center;
  gap: 2px;
  color: ${(p) => p.$c};
`;

const Tabular = () => (
  <TabularPanel>
    <PanelHeader title="Tabular Data" />
    <DataTable>
      <colgroup>{[9, 31, 69, 70, 64].map((w, i) => <Col key={i} $w={w} />)}</colgroup>
      <thead>
        <tr>
          <th />
          <th>Time [s]</th>
          <th><HeadLabel $c="#c02020"><Tick defaultChecked />Minimum [mm]</HeadLabel></th>
          <th><HeadLabel $c="#1f8a2f"><Tick defaultChecked />Maximum [mm]</HeadLabel></th>
          <th><HeadLabel $c="#2222b0"><Tick defaultChecked />Average [mm]</HeadLabel></th>
        </tr>
      </thead>
      <tbody>
        <tr><td>1</td><td>1.</td><td>0.</td><td>2.4792e+005</td><td>1.5615e+005</td></tr>
      </tbody>
    </DataTable>
  </TabularPanel>
);

/* ---------- status bar ---------- */

const Status = styled.footer`
  display: flex;
  align-items: center;
  justify-content: flex-end;
  gap: 8px;
  height: 14px;
  padding-right: 4px;
  background: ${c.blue};
  color: #fff;
  span { display: flex; align-items: center; gap: 3px; }
  span:nth-child(-n + 2) { margin-right: 4px; }
`;

/* ---------- taskbar ---------- */

const Taskbar = styled.footer`
  display: grid;
  grid-template-columns: 1fr auto 1fr;
  align-items: center;
  height: 31px;
  background: linear-gradient(90deg, #dbe8c0, #e6e4cf 8%, #dddcd8 22%, #d6dbdf 40%, #cfe4e8 50%, #cdeaf0 56%, #dfe0ec 62%, #d8e4e2 68%, #dfe9c4 74%, #e6eab4 84%, #e2eca8);
`;
const Widget = styled.div`
  display: flex;
  align-items: center;
  gap: 4px;
  padding-left: 12px;
  line-height: 11px;
  small { display: block; font-size: 8px; color: #666; }
`;
const Center = styled.div`
  display: flex;
  align-items: center;
  padding-left: 7px;
`;
const TaskSearch = styled.label`
  display: flex;
  align-items: center;
  gap: 6px;
  width: 142px;
  height: 20px;
  margin: 0 4px 0 9px;
  padding: 0 4px 0 7px;
  border-radius: 10px;
  background: #fafafa;
  input {
    flex: 1;
    min-width: 0;
    padding: 0;
    border: 0;
    background: none;
    font-size: 10px;
  }
  input::placeholder { color: #555; opacity: 1; }
`;
const Apps = styled.div`
  display: grid;
  grid-auto-flow: column;
  grid-auto-columns: 1fr;
  width: 502px;
`;
const AppSlot = styled(Plain)<{ $run?: boolean; $front?: boolean }>`
  position: relative;
  justify-content: center;
  height: 26px;
  ${(p) => p.$front && css`
    margin: 0 2px;
    border-radius: 3px;
    background: #f2f5ee;
  `}
  &::after {
    content: "";
    position: absolute;
    bottom: 0;
    left: 50%;
    width: ${(p) => (p.$front ? 10 : 4)}px;
    height: 2px;
    border-radius: 1px;
    transform: translateX(-50%);
    background: ${(p) => (p.$front ? "#3b8ea5" : p.$run ? "#888" : "transparent")};
  }
`;
const Tray = styled.div`
  display: flex;
  align-items: center;
  justify-content: flex-end;
  gap: 12px;
  padding-right: 12px;
  line-height: 11px;
  text-align: center;
  white-space: pre-line;
`;
const TrayPair = styled.span`
  display: flex;
  gap: 4px;
`;
const Clock = styled.time`
  text-align: right;
`;

const ansysTile = (letter: string) => (
  <g>
    <path d="M0 0h16v16H0z" fill="#0c0c0c" />
    <g fill="none" stroke="#f0b323" strokeWidth="1.400">
      <circle cx="6" cy="6.500" r="2" /><circle cx="10.500" cy="3" r="1.500" />
      {letter === "WB" && <circle cx="10.500" cy="7" r="1.500" />}
    </g>
    <text x="8" y="14" fontSize="6" fontWeight="700" fill="#fff" textAnchor="middle">{letter}</text>
  </g>
);
const apps: { name: string; art: React.ReactNode; run?: boolean; front?: boolean }[] = [
  { name: "Task view", art: (<g><path d="M1 5h11v10H1z" fill="#222" /><path d="M5 1h10v10H5z" fill="#cfcfcf" /></g>) },
  { name: "Teams", art: (<g><circle cx="12" cy="4" r="2" fill="#7b83eb" /><circle cx="8" cy="3" r="2.500" fill="#6b70d6" /><path d="M5 6h10v5q-1 4-5 4t-5-4z" fill="#7b83eb" /><path d="M0 4h9v9H0z" fill="#4b53bc" /><path d="M2 6h5M4.500 6v5" stroke="#fff" strokeWidth="1.300" /></g>) },
  { name: "Copilot", art: (<g><path d="M6 1h5l2 5H8L6 11H2Q0 9 2 4 3 1 6 1Z" fill="#2a9df4" /><path d="M10 15H5L3 10h5l2-5h4q2 2 0 7-1 3-4 3Z" fill="#f2703f" /><path d="M8 6h5l-2 6-3 2z" fill="#b558e6" /><path d="M2 8l1-4 4-2-2 8z" fill="#3fcf8e" /></g>) },
  { name: "Edge", art: (<g><circle cx="8" cy="8" r="7.500" fill="#1b77c9" /><path d="M1 7Q2 .5 9 .5q6 1 6.500 6 0 4-5 3.500 1-4-3-4.500Q2 6 1 7Z" fill="#45c98d" /><path d="M6 8q-1 6 6 6Q8 17 4 14 1 10 4 7.500Z" fill="#0c4f9e" /><path d="M7 8q3-2 3 2 2 2 5 0-2 4-6 3-3-2-2-5z" fill="#d6e6ea" /></g>) },
  { name: "Music", art: (<g><path d="M0 0h16v16H0z" fill="#fff" /><circle cx="8" cy="8" r="6.500" fill="none" stroke="#b06be0" /><path d="M6 11V5l5-1v6" fill="none" stroke="#e0457b" strokeWidth="1.300" /><circle cx="5" cy="11" r="1.300" fill="#e0457b" /><circle cx="10" cy="10" r="1.300" fill="#4a7be0" /></g>) },
  { name: "Chrome", art: (<g><circle cx="8" cy="8" r="7.500" fill="#f9c513" /><path d="M8 8 1.500 4.200A7.500 7.500 0 0 1 14.500 4.200Z" fill="#dd4b3e" /><path d="M8 8 1.500 4.200A7.500 7.500 0 0 0 8 15.500Z" fill="#2da04c" /><circle cx="8" cy="8" r="3.600" fill="#fff" /><circle cx="8" cy="8" r="2.700" fill="#4285f4" /></g>) },
  { name: "WhatsApp", run: true, art: (<g><path d="M1 15 2 11A7 7 0 1 1 5 14Z" fill="#fff" stroke="#1f9a57" strokeWidth="1.600" /><path d="M5 5q0 5 6 6l1-2-2-1-1 1Q7 8 7 7l1-1-1-2z" fill="#1f9a57" /><circle cx="12" cy="4" r="4" fill="#1c7f86" /><path d="M11.500 2.500 12.500 2v4.500" stroke="#fff" fill="none" /></g>) },
  { name: "Camera", art: (<g><path d="M1 4h3l1-2h5l1 2h3v8H1z" fill="#444" /><circle cx="7" cy="8" r="2.500" fill="#888" /><path d="M7 8h9v6H7z" fill="#2f7fc4" /><path d="M10 15h4" stroke="#333" /></g>) },
  { name: "SolidWorks", art: (<g><path d="M1 2 8 0l7 2v7H1z" fill="#c4161c" /><path d="M1 8.500h14V16H1z" fill="#222" /><text x="8" y="7" fontSize="6" fontWeight="700" fill="#fff" textAnchor="middle">SW</text><text x="8" y="14" fontSize="6" fontWeight="700" fill="#fff" textAnchor="middle">2021</text></g>) },
  { name: "Solid Edge", art: (<g><path d="M3 0h13v13H3z" fill="#1e9bb8" /><path d="M0 2h14v14H0z" fill="#1e4ea8" /><text x="7" y="12" fontSize="8" fontWeight="700" fill="#fff" textAnchor="middle">SE</text></g>) },
  { name: "Fusion", art: (<g><path d="M2 0h13v14H2z" fill="#f58220" /><path d="M1 12h14v4H1z" fill="#d15f10" /><text x="8" y="10" fontSize="9" fontWeight="700" fill="#fff" textAnchor="middle">F</text></g>) },
  { name: "Ansys", art: ansysTile("A") },
  { name: "Workbench", art: ansysTile("WB") },
  { name: "Clipchamp", run: true, art: (<g><path d="m1 4 13-4 1 4-13 4z" fill="#8a5be8" /><path d="M1 8h14v8H1z" fill="#6a3fd0" /><path d="M1 8h14v2H1z" fill="#b596f5" /></g>) },
  { name: "Workbench project", run: true, art: ansysTile("WB") },
  { name: "Mechanical", run: true, front: true, art: ansysTile("M") },
  { name: "File Explorer", run: true, art: (<g><path d="M0 2h6l2 2h8v11H0z" fill="#f0b429" /><path d="M0 6h16v9H0z" fill="#fbd45c" /><path d="M3 10h10v5H3z" fill="#1f7fc9" /></g>) },
];

export default function App() {
  return (
    <Page>
      <Global />
      <TitleBar>
        <QuickTools>
          <Icon name="app" size={12} />
          <Plain type="button" aria-label="Save"><Icon name="save" /></Plain>
          <Plain type="button" aria-label="Open"><Icon name="openBox" /></Plain>
          <Icon name="down" size={5} />
        </QuickTools>
        <ContextTab>Context</ContextTab>
        <WindowTitle>A : Stepped Bar Analysis - Mechanical [Ansys Mechanical Enterprise]</WindowTitle>
        <WindowButtons>
          <Plain type="button" aria-label="Minimize"><Icon name="minimize" size={8} /></Plain>
          <Plain type="button" aria-label="Restore"><Icon name="restore" size={8} /></Plain>
          <Plain type="button" aria-label="Close"><Icon name="close" size={8} /></Plain>
        </WindowButtons>
      </TitleBar>
      <TabBar>
        <Tab $w={37} $kind="file" type="button">File</Tab>
        <Tab $w={37} $kind="on" type="button">Home</Tab>
        {([["Result", 42], ["Display", 43], ["Selection", 52], ["Automation", 59], ["Add-ons", 49], ["Learning and Support", 95]] as [string, number][]).map(([t, w]) => (
          <Tab key={t} $w={w} type="button">{t}</Tab>
        ))}
        <TabTools>
          <QuickLaunch aria-label="Quick Launch" placeholder="Quick Launch" />
          <Icon name="note" size={10} />
          <Icon name="user" size={9} />
          <HelpMenu type="button" aria-label="Help"><Icon name="help" size={10} /><Caret /></HelpMenu>
          <Icon name="chevUp" size={8} />
        </TabTools>
      </TabBar>
      <RibbonBar />
      <Work>
        <LeftDock>
          <PanelHeader title="Outline" active />
          <FilterRow $h={19}>
            <Grip />
            <SelectBox $w={67}><select aria-label="Filter by"><option>Name</option></select></SelectBox>
            <SearchOutline aria-label="Search Outline" placeholder="Search Outline" />
            <Strip $h={14} $gap={1}><Icon name="chevUp" size={8} /><Overflow /></Strip>
          </FilterRow>
          <Strip $h={16} $gap={5}>
            <Grip />
            {["refresh", "eraser", "sort", "plusBox", "folder", "az"].map((n) => (
              <Plain key={n} type="button" aria-label={n}><Icon name={n} /></Plain>
            ))}
            <Overflow />
          </Strip>
          <Tree />
          <Strip $h={2} />
          <PanelHeader title={'Details of "Total Deformation"'} />
          <Details />
          <Strip $h={3} />
        </LeftDock>
        <RightDock>
          <Tools>
            <Grip />
            <Strip $h={15}>{viewTools.map(renderTool)}<Overflow /></Strip>
          </Tools>
          <View />
          <BottomDock>
            <Graph />
            <Tabular />
          </BottomDock>
        </RightDock>
      </Work>
      <Status>
        <span><Icon name="message" size={9} />1 Message</span>
        <span>No Selection</span>
        <span><Icon name="up" size={6} />Metric (mm, t, N, s, mV, mA)</span>
        <span>Degrees</span>
        <span>rad/s</span>
        <span>Celsius</span>
      </Status>
      <Taskbar>
        <Widget>
          <Svg width="18" height="18" viewBox="0 0 18 18" aria-hidden="true">
            <path d="M1 5h14v12H1z" fill="#1787b8" />
            <path d="M3 14V9h2v5M7 14v-3h2v3M11 14V8h2v6" fill="#fff" />
            <circle cx="13" cy="5" r="5" fill="#c42b1c" />
            <text x="13" y="8" fontSize="8" fill="#fff" textAnchor="middle">7</text>
          </Svg>
          <div>Finance headline<small>Volkswagen tax...</small></div>
        </Widget>
        <Center>
          <Plain type="button" aria-label="Start">
            <Svg width="16" height="16" viewBox="0 0 16 16"><path d="M0 0h7.600v7.600H0zM8.400 0H16v7.600H8.400zM0 8.400h7.600V16H0zM8.400 8.400H16V16H8.400z" fill="#1a86d9" /></Svg>
          </Plain>
          <TaskSearch>
            <Icon name="find" size={10} />
            <input aria-label="Search" placeholder="Search" />
            <Svg width="26" height="16" viewBox="0 0 26 16" aria-hidden="true">
              <path d="m5 5 3 8M21 5l-3 8" stroke="#d9b26a" strokeWidth="1.400" />
              <circle cx="4" cy="4" r="2" fill="#e8c98a" /><circle cx="22" cy="4" r="2" fill="#e8c98a" />
              <ellipse cx="13" cy="9" rx="6" ry="5" fill="#c9502c" />
              <ellipse cx="13" cy="7" rx="5" ry="3" fill="#7cb342" />
              <circle cx="11" cy="7" r="2" fill="#fdd835" /><circle cx="15" cy="9" r="2" fill="#ef6c00" />
            </Svg>
          </TaskSearch>
          <Apps>
            {apps.map((a) => (
              <AppSlot key={a.name} $run={a.run} $front={a.front} type="button" aria-label={a.name}>
                <Svg width="16" height="16" viewBox="0 0 16 16">{a.art}</Svg>
              </AppSlot>
            ))}
          </Apps>
        </Center>
        <Tray>
          <Icon name="chevDark" size={8} />
          <Svg width="12" height="10" viewBox="0 0 12 10"><path d="M3 9Q0 9 1 6 3 1 7 2q3 0 4 4 0 3-2 3Z" fill="#ddd" stroke="#444" /><path d="M2 6h8" stroke="#444" strokeWidth="2" /></Svg>
          <span>{"ENG\nIN"}</span>
          <TrayPair>
            <Svg width="11" height="10" viewBox="0 0 11 10"><path d="M1 4q4.500-4 9 0M2.500 6q3-3 6 0M4 8q1.500-1.500 3 0" fill="none" stroke="#555" /></Svg>
            <Svg width="10" height="10" viewBox="0 0 10 10"><path d="M1 4h2l2-2v6L3 6H1zM6.500 3q2 2 0 4M8 2q3 3 0 6" fill="none" stroke="#555" /></Svg>
          </TrayPair>
          <Clock>{"00:08\n25-03-2025"}</Clock>
        </Tray>
      </Taskbar>
    </Page>
  );
}
